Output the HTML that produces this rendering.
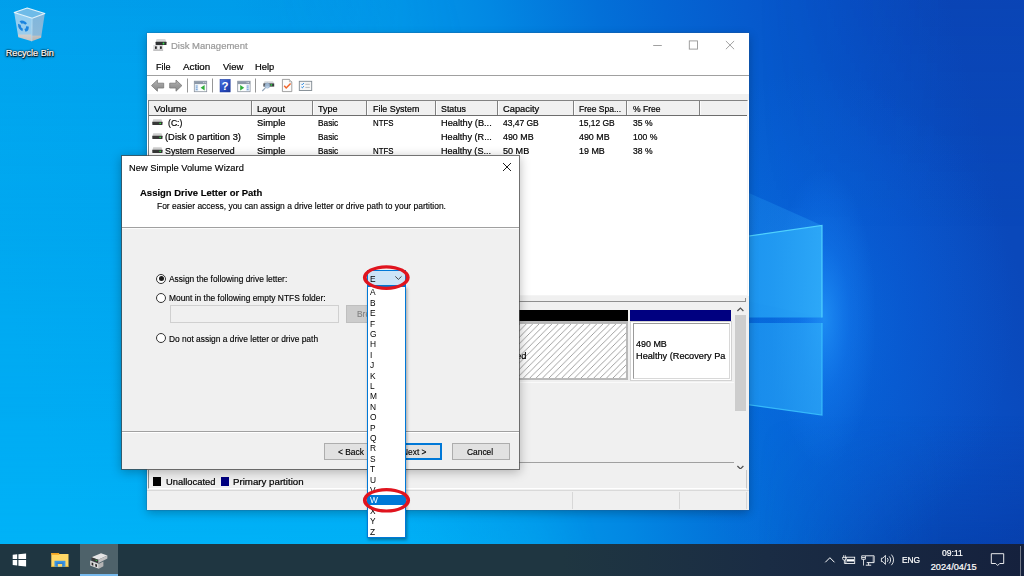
<!DOCTYPE html>
<html><head><meta charset="utf-8"><title>Disk Management</title>
<style>
html,body{margin:0;padding:0;width:1024px;height:576px;overflow:hidden;background:#0a7fdc;font-family:"Liberation Sans",sans-serif;color:#000;}
*{box-sizing:border-box;}
.abs{position:absolute;}
#wall{position:absolute;left:0;top:0;width:1024px;height:576px;}
.t{position:absolute;white-space:nowrap;line-height:1;-webkit-text-stroke:0.22px currentColor;}
/* ---------- main window ---------- */
#win{position:absolute;left:147px;top:33px;width:602px;height:477px;background:#fff;box-shadow:0 0 0 0.5px rgba(40,90,140,.5),0 3px 9px rgba(0,0,0,.26);}
#win .seg{font-size:10.1px;}
#tb{position:absolute;left:0;top:42px;width:602px;height:19px;border-top:1px solid #a0a0a0;background:#fff;}
#band{position:absolute;left:0;top:61px;width:602px;height:6px;background:#f0f0f0;}
#list{position:absolute;left:1px;top:67px;width:600px;height:196px;background:#fff;border:1px solid #828282;border-right-color:#f4f4f4;border-bottom-color:#f4f4f4;}
#lhead{position:absolute;left:0;top:0;width:598px;height:15px;background:#f0f0f0;border-bottom:1px solid #6d6d6d;}
.hd{position:absolute;top:0;height:14px;width:1px;background:#808080;box-shadow:1px 0 0 #fbfbfb;}
#split{position:absolute;left:0;top:263px;width:602px;height:7px;background:#f0f0f0;}
#lower{position:absolute;left:0;top:270px;width:602px;height:166px;background:#f0f0f0;}
#legend{position:absolute;left:0;top:436px;width:602px;height:21px;background:#f0f0f0;}
#status{position:absolute;left:0;top:457px;width:602px;height:20px;background:#f0f0f0;border-top:1px solid #d9d9d9;}
/* ---------- dialog ---------- */
#dlg{position:absolute;left:121px;top:155px;width:399px;height:315px;background:#f0f0f0;background-clip:padding-box;border:1px solid rgba(70,70,70,.72);box-shadow:0 2px 10px rgba(0,0,0,.27);}
#dlg .t{-webkit-text-stroke:0.15px currentColor;}
#dhead{position:absolute;left:0;top:0;width:397px;height:72px;background:#fff;border-bottom:1px solid #a0a0a0;box-shadow:0 1px 0 #fcfcfc;}
.btn{position:absolute;height:16px;border:1px solid #adadad;background:#e1e1e1;font-size:8.9px;text-align:center;line-height:14px;}
.radio{position:absolute;width:10px;height:10px;border-radius:50%;border:1px solid #333;background:#fff;}
/* ---------- dropdown ---------- */
#drop{position:absolute;left:367px;top:286px;width:39px;height:252px;background:#fff;border:1px solid #0078d7;box-shadow:1px 2px 3px rgba(0,0,0,.35);}
#drop div{position:absolute;left:0;width:37px;height:10.4px;font-size:9.3px;line-height:10.4px;padding-left:1.6px;}
#drop span{display:inline-block;transform:scaleX(.9);transform-origin:0 50%;}
/* ---------- taskbar ---------- */
#task{position:absolute;left:0;top:544px;width:1024px;height:32px;background:linear-gradient(90deg,#1f3641 0%,#1f3641 55%,#1a2c44 75%,#15213d 100%);}
#task .tt{color:#fff;font-size:9.3px;}
</style></head>

<body>

<svg id="wall" width="1024" height="576" viewBox="0 0 1024 576">
<defs>
<linearGradient id="gbase" gradientUnits="userSpaceOnUse" x1="0" y1="288" x2="959" y2="38">
<stop offset="0" stop-color="#00a8f0"/><stop offset="0.30" stop-color="#01a3ee"/><stop offset="0.46" stop-color="#0297e9"/><stop offset="0.55" stop-color="#0288e3"/><stop offset="0.655" stop-color="#0370d8"/><stop offset="0.72" stop-color="#0465d3"/><stop offset="0.80" stop-color="#065acd"/><stop offset="0.90" stop-color="#0850c5"/><stop offset="1" stop-color="#0a48ba"/>
</linearGradient>
<linearGradient id="gbot" x1="0" y1="0" x2="0" y2="1">
<stop offset="0" stop-color="#0060c8" stop-opacity="0.10"/><stop offset="0.35" stop-color="#00b8ff" stop-opacity="0"/><stop offset="0.7" stop-color="#00b8ff" stop-opacity="0.22"/><stop offset="1" stop-color="#00c0ff" stop-opacity="0.55"/>
</linearGradient>
<linearGradient id="gbotmask" gradientUnits="userSpaceOnUse" x1="0" y1="288" x2="959" y2="38">
<stop offset="0" stop-color="#fff"/><stop offset="0.34" stop-color="#fff"/><stop offset="0.52" stop-color="#000"/>
</linearGradient>
<mask id="mbot"><rect width="1024" height="576" fill="url(#gbotmask)"/></mask>
<radialGradient id="gglow" cx="815" cy="320" r="200" gradientUnits="userSpaceOnUse" gradientTransform="translate(815 320) scale(1 1.25) translate(-815 -320)">
<stop offset="0" stop-color="#1488ff" stop-opacity="0.34"/><stop offset="0.45" stop-color="#0c74f4" stop-opacity="0.20"/><stop offset="1" stop-color="#1478f0" stop-opacity="0"/>
</radialGradient>
<radialGradient id="gglow2" cx="0" cy="0" r="1" gradientUnits="userSpaceOnUse" gradientTransform="translate(824 318) scale(52 150)"><stop offset="0" stop-color="#28a0ff" stop-opacity="0.62"/><stop offset="0.5" stop-color="#1c8cff" stop-opacity="0.25"/><stop offset="1" stop-color="#2090ff" stop-opacity="0"/></radialGradient>
<linearGradient id="gdark" x1="0" y1="0" x2="0" y2="1">
<stop offset="0" stop-color="#052a90" stop-opacity="0.10"/><stop offset="0.4" stop-color="#052a90" stop-opacity="0"/><stop offset="0.72" stop-color="#052a90" stop-opacity="0"/><stop offset="1" stop-color="#04207c" stop-opacity="0.38"/>
</linearGradient>
<linearGradient id="gdmask" x1="0" y1="0" x2="1" y2="0">
<stop offset="0.74" stop-color="#000"/><stop offset="0.92" stop-color="#fff"/>
</linearGradient>
<mask id="mdark"><rect width="1024" height="576" fill="url(#gdmask)"/></mask>
<linearGradient id="gpane" x1="0" y1="0" x2="1" y2="0">
<stop offset="0" stop-color="#1690ee"/><stop offset="0.6" stop-color="#229cf3"/><stop offset="1" stop-color="#2eaaf8"/>
</linearGradient>
<linearGradient id="gbeam" gradientUnits="userSpaceOnUse" x1="560" y1="120" x2="822" y2="230">
<stop offset="0" stop-color="#30b0ff" stop-opacity="0"/><stop offset="1" stop-color="#30b0ff" stop-opacity="0.28"/>
</linearGradient>
</defs>
<rect width="1024" height="576" fill="url(#gbase)"/>
<rect width="1024" height="576" fill="url(#gbot)" mask="url(#mbot)"/>
<rect width="1024" height="576" fill="url(#gdark)" mask="url(#mdark)"/>
<rect width="1024" height="576" fill="url(#gglow)"/>
<rect width="1024" height="576" fill="url(#gglow2)"/>
<polygon points="540,100 822,225.5 822,317.5 560,260" fill="url(#gbeam)"/>
<!-- logo panes -->
<polygon points="700,243 822,225.5 822,317.5 700,317.5" fill="url(#gpane)" opacity="0.92"/>
<polygon points="700,323 822,323 822,415 700,398" fill="url(#gpane)" opacity="0.74"/>
<polyline points="700,243 822,225.5 822,317.5" fill="none" stroke="#55d8ff" stroke-width="1.2" opacity="0.9"/>
<polyline points="822,323 822,415 700,398" fill="none" stroke="#3fc8ff" stroke-width="1.2" opacity="0.8"/>
</svg>

<svg id="rb" class="abs" style="left:10px;top:4px" width="40" height="40" viewBox="10 4 40 40">
<defs><linearGradient id="rbl" x1="0" y1="0" x2="0" y2="1"><stop offset="0" stop-color="#8fcdf2"/><stop offset="0.75" stop-color="#9ccdec"/><stop offset="0.78" stop-color="#cfcfcf"/><stop offset="1" stop-color="#c4c4c4"/></linearGradient>
<linearGradient id="rbr" x1="0" y1="0" x2="0" y2="1"><stop offset="0" stop-color="#7fb6dc"/><stop offset="0.78" stop-color="#8cb9d9"/><stop offset="0.81" stop-color="#c2c2c2"/><stop offset="1" stop-color="#b4b4b4"/></linearGradient></defs>
<polygon points="14.2,12.4 27.2,8 44.8,13.6 32.2,18.3" fill="#6fbbe8"/>
<polygon points="14.2,12.4 32.2,18.3 31.7,41.3 18.3,37.2" fill="url(#rbl)"/>
<polygon points="32.2,18.3 44.8,13.6 41.1,37.8 31.7,41.3" fill="url(#rbr)"/>
<polygon points="14.2,12.4 27.2,8 44.8,13.6 32.2,18.3" fill="none" stroke="#e4f3fb" stroke-width="1.1" stroke-linejoin="round"/>
<path d="M32.2 18.3L31.7 41.3" stroke="#c4e2f4" stroke-width="0.7"/>
<g transform="matrix(1 0.28 0 1 0 -6.5)"><circle cx="23.4" cy="26.1" r="4" fill="none" stroke="#1b84df" stroke-width="2.7" stroke-dasharray="6 2.38" stroke-dashoffset="1.5"/></g>
</svg>
<div class="t" id="rbt" style="left:5.8px;top:48.6px;font-size:9.1px;color:#fff;text-shadow:0.6px 0.9px 1px #000,0 0 2px #000,0 1px 2.5px rgba(0,0,0,.9),0 0 1px #000;">Recycle Bin</div>

<div id="win" style="left:147px;top:33px">
<svg class="abs" style="left:5px;top:5px" width="16" height="14" viewBox="5 5 16 14">
<path d="M9.6 6.1h8.6l1.3 2.8h-10.9z" fill="#d6d8da"/>
<rect x="8.6" y="8.8" width="10.9" height="3.3" rx="0.5" fill="#2f3133"/>
<circle cx="16.5" cy="10.5" r="0.9" fill="#35e04a"/>
<rect x="6.3" y="12" width="9.8" height="5.7" fill="#d9d9db"/>
<rect x="6.3" y="16.6" width="9.8" height="1.1" fill="#b4b4b6"/>
<rect x="8" y="13.2" width="1.8" height="2.7" rx="0.6" fill="#2a2a2a"/>
<rect x="13" y="13.2" width="1.8" height="2.7" rx="0.6" fill="#2a2a2a"/>
<rect x="10.9" y="12.6" width="1" height="3.8" fill="#f4f4f4"/>
</svg>

<div class="t" style="left:23.60px;top:8px;font-size:9.9px;color:#999;transform:scaleX(0.962);transform-origin:0 0;">Disk Management</div>
<svg class="abs" style="left:500px;top:0" width="102" height="24" viewBox="0 0 102 24">
<path d="M6.2 12.5h8.6" stroke="#969696" stroke-width="0.9" fill="none"/>
<rect x="42.3" y="7.9" width="8.2" height="8.2" stroke="#969696" stroke-width="0.9" fill="none"/>
<path d="M78.9 8l8.2 8.2M87.1 8l-8.2 8.2" stroke="#969696" stroke-width="0.9" fill="none"/>
</svg>
<div class="t" style="left:8.50px;top:29px;font-size:9.8px;transform:scaleX(0.924);transform-origin:0 0;">File</div>
<div class="t" style="left:35.70px;top:29px;font-size:9.8px;transform:scaleX(0.999);transform-origin:0 0;">Action</div>
<div class="t" style="left:76.00px;top:29px;font-size:9.8px;transform:scaleX(0.959);transform-origin:0 0;">View</div>
<div class="t" style="left:108.40px;top:29px;font-size:9.8px;transform:scaleX(0.953);transform-origin:0 0;">Help</div>
<div id="tb"></div>
<svg class="abs" style="left:0;top:43px" width="180" height="18" viewBox="147 76 180 18">
<defs><linearGradient id="ga" x1="0" y1="0" x2="0" y2="1"><stop offset="0" stop-color="#b9b9b9"/><stop offset="0.5" stop-color="#9a9a9a"/><stop offset="1" stop-color="#8a8a8a"/></linearGradient>
<linearGradient id="gh" x1="0" y1="0" x2="1" y2="1"><stop offset="0" stop-color="#4f78e0"/><stop offset="0.5" stop-color="#2a4fc6"/><stop offset="1" stop-color="#1c3796"/></linearGradient></defs>
<!-- back / forward arrows -->
<path d="M151.5 85.6l5.9-5.6v3.2h6.3v4.8h-6.3v3.2z" fill="url(#ga)" stroke="#777" stroke-width="0.8" stroke-linejoin="round"/>
<path d="M181.9 85.6l-5.9-5.6v3.2h-6.3v4.8h6.3v3.2z" fill="url(#ga)" stroke="#777" stroke-width="0.8" stroke-linejoin="round"/>
<rect x="187" y="78.5" width="0.9" height="14" fill="#8c8c8c"/>
<!-- show/hide console tree -->
<rect x="194.3" y="81.2" width="12.4" height="10.5" fill="#fbfcfd" stroke="#8a939e" stroke-width="0.8"/>
<rect x="194.3" y="81.2" width="12.4" height="2.9" fill="#8d99a8"/>
<path d="M203.3 82.6h0.8M204.8 82.6h0.8" stroke="#fff" stroke-width="0.8"/>
<rect x="195.2" y="84.6" width="3" height="6.4" fill="#dbe8f6"/>
<path d="M195.8 86h1.8M195.8 87.8h1.8M195.8 89.6h1.8" stroke="#5b8fd0" stroke-width="0.8"/>
<path d="M204.6 85v5.4l-4-2.7z" fill="#2fae3a"/>
<rect x="212" y="78.5" width="0.9" height="14" fill="#8c8c8c"/>
<!-- help -->
<rect x="220" y="79.3" width="10.2" height="12.7" fill="url(#gh)"/>
<rect x="220" y="79.3" width="10.2" height="12.7" fill="none" stroke="#1d3a9c" stroke-width="0.5"/>
<text x="225.1" y="90" font-family="Liberation Sans" font-weight="700" font-size="11.5" fill="#fff" text-anchor="middle">?</text>
<!-- action pane -->
<rect x="237.7" y="81.2" width="12.4" height="10.5" fill="#fbfcfd" stroke="#8a939e" stroke-width="0.8"/>
<rect x="237.7" y="81.2" width="12.4" height="2.9" fill="#8d99a8"/>
<path d="M246.7 82.6h0.8M248.2 82.6h0.8" stroke="#fff" stroke-width="0.8"/>
<rect x="246.2" y="84.6" width="3" height="6.4" fill="#dbe8f6"/>
<path d="M246.8 86h1.8M246.8 87.8h1.8M246.8 89.6h1.8" stroke="#5b8fd0" stroke-width="0.8"/>
<path d="M240.2 85v5.4l4-2.7z" fill="#2fae3a"/>
<rect x="255" y="78.5" width="0.9" height="14" fill="#8c8c8c"/>
<!-- disk w/ magnifier -->
<path d="M264.6 81.3h8.4l1.2 2.2h-10.8z" fill="#d4d8dc"/>
<rect x="263.4" y="83.4" width="10.8" height="3.2" fill="#3a3d40"/>
<rect x="270.6" y="84.2" width="1.5" height="1.5" fill="#2fe046"/>
<circle cx="267.3" cy="85.6" r="2.5" fill="#b9d6f2" fill-opacity="0.8" stroke="#8aa4c0" stroke-width="0.7"/>
<path d="M265.5 87.6l-3.2 3.4" stroke="#8ea2b6" stroke-width="1.1"/>
<!-- doc w/ check -->
<path d="M282.4 79.4h7l2.4 2.4v9.8h-9.4z" fill="#fbfbfb" stroke="#8a8a8a" stroke-width="0.8"/>
<path d="M289.4 79.4v2.4h2.4" fill="#e4e4e4" stroke="#8a8a8a" stroke-width="0.5"/>
<path d="M284.2 85.8l2 2.2 4.4-4.6" stroke="#f0642a" stroke-width="1.5" fill="none"/>
<!-- checklist -->
<rect x="299.3" y="81.3" width="12.4" height="9.2" fill="#f6f6f6" stroke="#7e8890" stroke-width="0.9"/>
<path d="M301.4 83.9l.9.9 1.6-1.8M301.4 87l.9.9 1.6-1.8" stroke="#2b8be6" stroke-width="1" fill="none"/>
<path d="M305.4 84.3h4.4M305.4 87.4h4.4" stroke="#9aa0a6" stroke-width="0.7"/>
</svg>

<div id="band"></div>
<div id="list"><div id="lhead"></div>
<div class="t" style="left:4.75px;top:3px;font-size:9.8px;transform:scaleX(1.002);transform-origin:0 0;">Volume</div>
<div class="t" style="left:107.60px;top:3px;font-size:9.8px;transform:scaleX(0.952);transform-origin:0 0;">Layout</div>
<div class="t" style="left:169.00px;top:3px;font-size:9.8px;transform:scaleX(0.918);transform-origin:0 0;">Type</div>
<div class="t" style="left:223.50px;top:3px;font-size:9.8px;transform:scaleX(0.904);transform-origin:0 0;">File System</div>
<div class="t" style="left:292.25px;top:3px;font-size:9.8px;transform:scaleX(0.9);transform-origin:0 0;">Status</div>
<div class="t" style="left:353.50px;top:3px;font-size:9.8px;transform:scaleX(0.951);transform-origin:0 0;">Capacity</div>
<div class="t" style="left:430.25px;top:3px;font-size:9.8px;transform:scaleX(0.867);transform-origin:0 0;">Free Spa...</div>
<div class="t" style="left:483.50px;top:3px;font-size:9.8px;transform:scaleX(0.871);transform-origin:0 0;">% Free</div>
<div class="hd" style="left:101.75px"></div>
<div class="hd" style="left:162.50px"></div>
<div class="hd" style="left:216.75px"></div>
<div class="hd" style="left:285.50px"></div>
<div class="hd" style="left:347.50px"></div>
<div class="hd" style="left:423.75px"></div>
<div class="hd" style="left:476.75px"></div>
<div class="hd" style="left:550.00px"></div>
<svg class="abs" style="left:2.80px;top:17.95px" width="11" height="7" viewBox="0 0 11 7"><path d="M1.3 0.2h8.2l1 2.7h-10.2z" fill="#cfcfcf"/><rect x="0.3" y="2.8" width="10.2" height="3.2" rx="0.4" fill="#383838"/><rect x="7.4" y="3.8" width="1.6" height="1.2" fill="#30e040"/></svg>
<div class="t" style="left:18.75px;top:17px;font-size:9.8px;transform:scaleX(0.882);transform-origin:0 0;">(C:)</div>
<div class="t" style="left:107.60px;top:17px;font-size:9.8px;transform:scaleX(0.951);transform-origin:0 0;">Simple</div>
<div class="t" style="left:169.00px;top:17px;font-size:9.8px;transform:scaleX(0.845);transform-origin:0 0;">Basic</div>
<div class="t" style="left:223.50px;top:17px;font-size:9.8px;transform:scaleX(0.801);transform-origin:0 0;">NTFS</div>
<div class="t" style="left:292.25px;top:17px;font-size:9.8px;transform:scaleX(0.941);transform-origin:0 0;">Healthy (B...</div>
<div class="t" style="left:353.50px;top:17px;font-size:9.8px;transform:scaleX(0.863);transform-origin:0 0;">43,47 GB</div>
<div class="t" style="left:430.25px;top:17px;font-size:9.8px;transform:scaleX(0.863);transform-origin:0 0;">15,12 GB</div>
<div class="t" style="left:483.50px;top:17px;font-size:9.8px;transform:scaleX(0.873);transform-origin:0 0;">35 %</div>
<svg class="abs" style="left:2.80px;top:31.85px" width="11" height="7" viewBox="0 0 11 7"><path d="M1.3 0.2h8.2l1 2.7h-10.2z" fill="#cfcfcf"/><rect x="0.3" y="2.8" width="10.2" height="3.2" rx="0.4" fill="#383838"/><rect x="7.4" y="3.8" width="1.6" height="1.2" fill="#30e040"/></svg>
<div class="t" style="left:16.20px;top:31px;font-size:9.8px;transform:scaleX(0.956);transform-origin:0 0;">(Disk 0 partition 3)</div>
<div class="t" style="left:107.60px;top:31px;font-size:9.8px;transform:scaleX(0.951);transform-origin:0 0;">Simple</div>
<div class="t" style="left:169.00px;top:31px;font-size:9.8px;transform:scaleX(0.845);transform-origin:0 0;">Basic</div>
<div class="t" style="left:292.25px;top:31px;font-size:9.8px;transform:scaleX(0.932);transform-origin:0 0;">Healthy (R...</div>
<div class="t" style="left:353.50px;top:31px;font-size:9.8px;transform:scaleX(0.906);transform-origin:0 0;">490 MB</div>
<div class="t" style="left:430.25px;top:31px;font-size:9.8px;transform:scaleX(0.906);transform-origin:0 0;">490 MB</div>
<div class="t" style="left:483.50px;top:31px;font-size:9.8px;transform:scaleX(0.882);transform-origin:0 0;">100 %</div>
<svg class="abs" style="left:2.80px;top:45.55px" width="11" height="7" viewBox="0 0 11 7"><path d="M1.3 0.2h8.2l1 2.7h-10.2z" fill="#cfcfcf"/><rect x="0.3" y="2.8" width="10.2" height="3.2" rx="0.4" fill="#383838"/><rect x="7.4" y="3.8" width="1.6" height="1.2" fill="#30e040"/></svg>
<div class="t" style="left:16.20px;top:45px;font-size:9.8px;transform:scaleX(0.9);transform-origin:0 0;">System Reserved</div>
<div class="t" style="left:107.60px;top:45px;font-size:9.8px;transform:scaleX(0.951);transform-origin:0 0;">Simple</div>
<div class="t" style="left:169.00px;top:45px;font-size:9.8px;transform:scaleX(0.845);transform-origin:0 0;">Basic</div>
<div class="t" style="left:223.50px;top:45px;font-size:9.8px;transform:scaleX(0.801);transform-origin:0 0;">NTFS</div>
<div class="t" style="left:292.25px;top:45px;font-size:9.8px;transform:scaleX(0.928);transform-origin:0 0;">Healthy (S...</div>
<div class="t" style="left:353.50px;top:45px;font-size:9.8px;transform:scaleX(0.927);transform-origin:0 0;">50 MB</div>
<div class="t" style="left:430.25px;top:45px;font-size:9.8px;transform:scaleX(0.909);transform-origin:0 0;">19 MB</div>
<div class="t" style="left:483.50px;top:45px;font-size:9.8px;transform:scaleX(0.873);transform-origin:0 0;">38 %</div>
</div>
<div id="split"><div class="abs" style="left:1px;top:4.5px;width:598px;height:1.5px;background:#8e8e8e"></div><div class="abs" style="left:598px;top:2px;width:1px;height:4px;background:#8e8e8e"></div></div>
<div id="lower"></div>
<div class="abs" style="left:3.00px;top:277.20px;width:82.00px;height:70.30px;background:#f0f0f0;border:1px solid #a0a0a0"></div>
<div class="abs" style="left:88.00px;top:277.20px;width:65.00px;height:10.60px;background:#000080;"></div>
<div class="abs" style="left:88.00px;top:287.80px;width:65.00px;height:59.70px;background:#fff;border:1px solid #a0a0a0"></div>
<div class="abs" style="left:155.50px;top:277.20px;width:167.50px;height:10.60px;background:#000080;"></div>
<div class="abs" style="left:155.50px;top:287.80px;width:167.50px;height:59.70px;background:#fff;border:1px solid #a0a0a0"></div>
<div class="abs" style="left:325.50px;top:277.20px;width:155.50px;height:10.60px;background:#000;"></div>
<div class="abs" style="left:325.50px;top:287.80px;width:155.50px;height:59.70px;background:#b9b9b9;"></div>
<svg class="abs" style="left:328px;top:290.60px" width="151" height="54.4" viewBox="0 0 151 54.4"><defs><pattern id="hat" width="6.4" height="6.4" patternUnits="userSpaceOnUse"><rect width="6.4" height="6.4" fill="#fff"/><path d="M-1 7.4L7.4 -1M-1 1L1 -1M5.4 7.4L7.4 5.4" stroke="#979797" stroke-width="0.9"/></pattern></defs><rect width="151" height="54.4" fill="url(#hat)"/></svg>
<div class="t" style="left:329.50px;top:306px;font-size:9.8px;transform:scaleX(0.869);transform-origin:0 0;">10,00 GB</div>
<div class="t" style="left:329.50px;top:318px;font-size:9.8px;transform:scaleX(0.957);transform-origin:0 0;">Unallocated</div>
<div class="abs" style="left:483.30px;top:277.20px;width:100.40px;height:10.60px;background:#000080;"></div>
<div class="abs" style="left:483.30px;top:287.80px;width:101.50px;height:59.80px;background:#fff;border:1px solid #d2d2d2"></div>
<div class="abs" style="left:486.30px;top:290.20px;width:96.30px;height:55.40px;background:#fff;border:1px solid #9a9a9a;border-right-color:#d8d8d8;border-bottom-color:#d8d8d8"></div>
<div class="t" style="left:489.20px;top:306px;font-size:9.8px;transform:scaleX(0.912);transform-origin:0 0;">490 MB</div>
<div class="t" style="left:489.20px;top:318px;font-size:9.8px;transform:scaleX(0.938);transform-origin:0 0;">Healthy (Recovery Pa</div>
<div class="abs" style="left:1.00px;top:349.40px;width:585.50px;height:1.00px;background:#fafafa;"></div>
<div class="abs" style="left:1.00px;top:429.00px;width:585.50px;height:1.00px;background:#a0a0a0;"></div>
<div class="abs" style="left:587.20px;top:270.00px;width:13.40px;height:166.00px;background:#f0f0f0;"></div>
<div class="abs" style="left:588.30px;top:282.20px;width:10.70px;height:96.00px;background:#cdcdcd;"></div>
<svg class="abs" style="left:589px;top:272.5px" width="9" height="7" viewBox="0 0 9 7"><path d="M1.4 5l3-3 3 3" stroke="#505050" stroke-width="1.2" fill="none"/></svg>
<svg class="abs" style="left:589px;top:430.5px" width="9" height="7" viewBox="0 0 9 7"><path d="M1.4 2l3 3 3-3" stroke="#505050" stroke-width="1.2" fill="none"/></svg>
<div id="legend"></div>
<div class="abs" style="left:1.00px;top:436.50px;width:598.50px;height:19.50px;background:#f0f0f0;border-left:1px solid #8a8a8a;border-right:1px solid #c8c8c8;border-bottom:1px solid #fff"></div>
<div class="abs" style="left:6.30px;top:443.80px;width:8.20px;height:9.00px;background:#000;"></div>
<div class="t" style="left:18.90px;top:444px;font-size:9.8px;transform:scaleX(0.957);transform-origin:0 0;">Unallocated</div>
<div class="abs" style="left:73.80px;top:443.80px;width:8.10px;height:9.00px;background:#000080;"></div>
<div class="t" style="left:86.10px;top:444px;font-size:9.8px;transform:scaleX(0.99);transform-origin:0 0;">Primary partition</div>
<div id="status"></div>
<div class="abs" style="left:425.00px;top:458.50px;width:1.00px;height:17.00px;background:#d7d7d7;"></div>
<div class="abs" style="left:531.70px;top:458.50px;width:1.00px;height:17.00px;background:#d7d7d7;"></div>
<div class="abs" style="left:599.00px;top:458.50px;width:1.00px;height:17.00px;background:#d7d7d7;"></div>

</div>
<div id="dlg">
<div id="dhead"></div>
<div class="t" style="left:6.60px;top:7px;font-size:9.6px;transform:scaleX(0.97);transform-origin:0 0;">New Simple Volume Wizard</div>
<svg class="abs" style="left:380px;top:6px" width="10" height="10" viewBox="0 0 10 10"><path d="M1 1l8 8M9 1l-8 8" stroke="#111" stroke-width="0.95" fill="none"/></svg>
<div class="t" style="left:17.50px;top:32px;font-size:9.4px;font-weight:700;transform:scaleX(1.012);transform-origin:0 0;">Assign Drive Letter or Path</div>
<div class="t" style="left:34.60px;top:46px;font-size:9.2px;transform:scaleX(0.92);transform-origin:0 0;">For easier access, you can assign a drive letter or drive path to your partition.</div>
<div class="radio" style="left:34.30px;top:117.80px"><div class="abs" style="left:1.5px;top:1.5px;width:5px;height:5px;border-radius:50%;background:#1c1c1c"></div></div>
<div class="t" style="left:47.20px;top:119px;font-size:9.2px;transform:scaleX(0.915);transform-origin:0 0;">Assign the following drive letter:</div>
<div class="radio" style="left:34.30px;top:137.00px"></div>
<div class="t" style="left:47.20px;top:138px;font-size:9.2px;transform:scaleX(0.915);transform-origin:0 0;">Mount in the following empty NTFS folder:</div>
<div class="radio" style="left:34.30px;top:177.30px"></div>
<div class="t" style="left:47.20px;top:179px;font-size:9.2px;transform:scaleX(0.915);transform-origin:0 0;">Do not assign a drive letter or drive path</div>
<div class="abs" style="left:48px;top:149px;width:169px;height:18px;border:1px solid #d0d0d0;background:#f0f0f0"></div>
<div class="abs" style="left:224px;top:149px;width:59px;height:17.5px;background:#cccccc;border:1px solid #bfbfbf"></div>
<div class="t" style="left:235.00px;top:154px;font-size:9.2px;color:#838383;transform:scaleX(0.915);transform-origin:0 0;">Browse...</div>
<div id="combo" class="abs" style="left:245px;top:114px;width:39px;height:16px;background:#cce4f7;border:1px solid #0078d7"></div>
<div class="t" style="left:248.20px;top:119px;font-size:9.2px;transform:scaleX(0.915);transform-origin:0 0;-webkit-text-stroke:0;">E</div>
<svg class="abs" style="left:272.2px;top:118.30000000000001px" width="9" height="7" viewBox="0 0 9 7"><path d="M1.3 2.4l3.1 3 3.1-3" stroke="#333" stroke-width="0.9" fill="none"/></svg>
<div class="abs" style="left:0;top:275.20px;width:397px;height:1px;background:#a0a0a0"></div><div class="abs" style="left:0;top:276.20px;width:397px;height:1px;background:#fff"></div>
<div class="abs" style="left:202.10px;top:287.40px;width:59.10px;height:16.2px;background:#e1e1e1;border:1px solid #adadad"></div><div class="t" style="left:216.30px;top:292px;font-size:9.2px;transform:scaleX(0.915);transform-origin:0 0;">&lt; Back</div>
<div class="abs" style="left:261.60px;top:287.40px;width:58.40px;height:16.2px;background:#e1e1e1;border:2px solid #0078d7"></div><div class="t" style="left:279.50px;top:292px;font-size:9.2px;transform:scaleX(0.915);transform-origin:0 0;">Next &gt;</div>
<div class="abs" style="left:330.10px;top:287.40px;width:58.30px;height:16.2px;background:#e1e1e1;border:1px solid #adadad"></div><div class="t" style="left:345.40px;top:292px;font-size:9.2px;transform:scaleX(0.915);transform-origin:0 0;">Cancel</div>
</div>

<div id="drop">
<div style="top:0px"><span>A</span></div>
<div style="top:11px"><span>B</span></div>
<div style="top:21px"><span>E</span></div>
<div style="top:32px"><span>F</span></div>
<div style="top:42px"><span>G</span></div>
<div style="top:52px"><span>H</span></div>
<div style="top:63px"><span>I</span></div>
<div style="top:73px"><span>J</span></div>
<div style="top:84px"><span>K</span></div>
<div style="top:94px"><span>L</span></div>
<div style="top:104px"><span>M</span></div>
<div style="top:115px"><span>N</span></div>
<div style="top:125px"><span>O</span></div>
<div style="top:136px"><span>P</span></div>
<div style="top:146px"><span>Q</span></div>
<div style="top:156px"><span>R</span></div>
<div style="top:167px"><span>S</span></div>
<div style="top:177px"><span>T</span></div>
<div style="top:188px"><span>U</span></div>
<div style="top:198px"><span>V</span></div>
<div style="top:208px;background:#0078d7;color:#fff"><span>W</span></div>
<div style="top:219px"><span>X</span></div>
<div style="top:229px"><span>Y</span></div>
<div style="top:240px"><span>Z</span></div>
</div>
<svg class="abs" style="left:0;top:0;pointer-events:none" width="1024" height="576" viewBox="0 0 1024 576">
<path fill-rule="evenodd" fill="#e0141e" d="M362.90000000000003 277.6a23.4 12.4 0 1 0 46.8 0a23.4 12.4 0 1 0 -46.8 0zM366.7 277.6a19.6 9.2 0 1 0 39.2 0a19.6 9.2 0 1 0 -39.2 0z"/>
<path fill-rule="evenodd" fill="#e0141e" d="M362.9 500.3a23.6 12.3 0 1 0 47.2 0a23.6 12.3 0 1 0 -47.2 0zM366.7 500.3a19.8 9.1 0 1 0 39.6 0a19.8 9.1 0 1 0 -39.6 0z"/>
</svg>
<div id="task">
<div class="abs" style="left:80px;top:0;width:38px;height:32px;background:#4e626a"></div>
<div class="abs" style="left:80px;top:30px;width:38px;height:2px;background:#76b9ed"></div>
<svg class="abs" style="left:0;top:0" width="128" height="32" viewBox="0 544 128 32">
<!-- start -->
<path d="M12.7 554.8L17.2 554.33V558.9H12.7zM18.4 554.2L26.1 553.4V558.9H18.4zM12.7 560.1H17.2V565.5L12.7 565zM18.4 560.1H26.1V566.5L18.4 565.64z" fill="#fff"/>
<!-- explorer -->
<path d="M51.3 553h7.3l.8 .9h9.1v12.8h-17.2z" fill="#ffd866"/>
<path d="M51.3 553h7.3l.8 .9v.8h-8.1z" fill="#f2a31f"/>
<rect x="51.3" y="565.9" width="17.2" height="0.8" fill="#eab52e"/>
<path d="M54.5 560.8h10.9v5.9h-10.9z" fill="#3d97e3"/>
<path d="M56.4 562.5h7.1v4.2h-7.1z" fill="#2f7fd0"/>
<path d="M57.8 564h4.4v2.7h-4.4z" fill="#ffd866"/>
<!-- disk mgmt -->
<path d="M91.5 557.2l9.5-4 6.4 2.2-9.2 4.4z" fill="#e4e4e4"/>
<path d="M98.2 559.8l9.2-4.4v3.2l-9.2 4.6z" fill="#c2c2c2"/>
<path d="M91.5 557.2l6.7 2.6v3.4l-6.7-2.6z" fill="#3a3a3a"/>
<path d="M95.6 559.6l1.6.6v.9l-1.6-.6z" fill="#2fd14a"/>
<path d="M90.2 560.4l8.6 3.3v5l-8.6-3.2z" fill="#dadada"/>
<path d="M98.8 563.7l4.6-2.2v4.8l-4.6 2.4z" fill="#b4b4b4"/>
<path d="M91.6 562.4l1.7.7v2.6l-1.7-.6zM95.3 563.8l1.7.7v2.6l-1.7-.6z" fill="#2a2a2a"/>
</svg>
<svg class="abs" style="left:816px;top:0" width="208" height="32" viewBox="816 544 208 32">
<path d="M825.3 562.3l4.6-4.6 4.6 4.6" stroke="#fff" stroke-width="1" fill="none"/>
<!-- power/battery -->
<rect x="845.9" y="557.2" width="8.8" height="6.3" fill="none" stroke="#fff" stroke-width="0.85"/>
<rect x="847" y="559.2" width="7" height="2.3" fill="#fff"/>
<path d="M843.6 555.2v2.2M845.3 555.2v2.2" stroke="#fff" stroke-width="0.75" fill="none"/>
<path d="M842.5 557.4h3.7v1.1a1.85 1.6 0 0 1 -3.7 0zM844.4 560v3.5h1.6" stroke="#fff" stroke-width="0.8" fill="none"/>
<!-- network -->
<path d="M865.4 555.8h8.7v6.8h-7.4" stroke="#fff" stroke-width="0.9" fill="none"/>
<path d="M873.2 556.3v5.8" stroke="#aeb3bd" stroke-width="1" fill="none"/>
<path d="M868.6 562.6v2.6M865.8 565.2h5.4" stroke="#fff" stroke-width="0.9" fill="none"/>
<path d="M861.7 555.8h3.7v3.5h-3.7zM861.7 557.5h3.7M863.5 559.3v6.2" stroke="#fff" stroke-width="0.8" fill="none"/>
<!-- volume -->
<path d="M881.4 558.2h1.4l2.6-2.8v9l-2.6-2.8h-1.4z" stroke="#fff" stroke-width="0.85" fill="none" stroke-linejoin="round"/>
<path d="M887.3 558a2.8 2.8 0 0 1 0 3.8M889.2 556.4a5 5 0 0 1 0 7M891.4 554.6a7.6 7.6 0 0 1 0 10.6" stroke="#fff" stroke-width="0.85" fill="none"/>
<!-- notification -->
<path d="M991.3 553.7h12.4v9.8h-4l-2 2-2-2h-4.4z" stroke="#fff" stroke-width="0.9" fill="none"/>
<rect x="1020" y="546" width="0.8" height="30" fill="#8b909c"/>
</svg>
<div class="t tt" style="left:901.6px;top:12px;font-size:9.2px;transform:scaleX(.91);transform-origin:0 0">ENG</div>
<div class="t tt" style="left:942.1px;top:5px;font-size:9.1px;transform:scaleX(.94);transform-origin:0 0">09:11</div>
<div class="t tt" style="left:930.7px;top:19px;font-size:9.2px">2024/04/15</div>
</div>


</body></html>
